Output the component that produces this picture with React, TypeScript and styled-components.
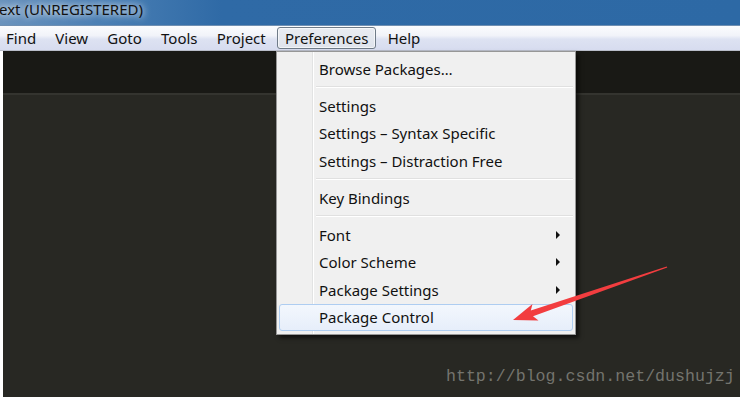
import React from 'react';
import styled, { createGlobalStyle } from 'styled-components';

type Entry =
  | { kind: 'item'; label: string; sub?: boolean; active?: boolean }
  | { kind: 'sep' };

const menuBarItems = ['Find', 'View', 'Goto', 'Tools', 'Project', 'Preferences', 'Help'];

const entries: Entry[] = [
  { kind: 'item', label: 'Browse Packages…' },
  { kind: 'sep' },
  { kind: 'item', label: 'Settings' },
  { kind: 'item', label: 'Settings – Syntax Specific' },
  { kind: 'item', label: 'Settings – Distraction Free' },
  { kind: 'sep' },
  { kind: 'item', label: 'Key Bindings' },
  { kind: 'sep' },
  { kind: 'item', label: 'Font', sub: true },
  { kind: 'item', label: 'Color Scheme', sub: true },
  { kind: 'item', label: 'Package Settings', sub: true },
  { kind: 'item', label: 'Package Control', active: true },
];

function App() {
  return (
    <>
      <GlobalStyle />
      <Page>
        <Window>
          <TitleBar>
            <TitleText>ext (UNREGISTERED)</TitleText>
          </TitleBar>
          <MenuBar>
            {menuBarItems.map((m) => (
              <MenuBarItem key={m} $open={m === 'Preferences'}>
                {m}
              </MenuBarItem>
            ))}
          </MenuBar>
          <Workspace>
            <TabStrip />
            <Editor />
          </Workspace>
        </Window>

        <Dropdown>
          <Gutter />
          {entries.map((e, i) =>
            e.kind === 'sep' ? (
              <Separator key={i} />
            ) : (
              <Item key={i} $active={e.active}>
                <span>{e.label}</span>
                {e.sub && <SubArrow />}
              </Item>
            )
          )}
        </Dropdown>

        <Pointer viewBox="0 0 747 397" width="747" height="397">
          <polygon
            points="513,320 538.5,320.5 533,316.2 667.3,267.6 666.7,266.4 530.8,310.6 532.5,304"
            fill="#f23d3f"
          />
        </Pointer>

        <Watermark>http://blog.csdn.net/dushujzj</Watermark>
      </Page>
    </>
  );
}

const GlobalStyle = createGlobalStyle`
  html, body {
    margin: 0;
    padding: 0;
    background: #fff;
  }
  body {
    font-family: 'Noto Sans', 'Open Sans', sans-serif;
    -webkit-font-smoothing: antialiased;
  }
`;

const Page = styled.div`
  position: relative;
  width: 747px;
  height: 397px;
  overflow: hidden;
  background: #ffffff;
`;

const Window = styled.div`
  width: 740px;
  height: 397px;
  display: flex;
  flex-direction: column;
`;

const TitleBar = styled.div`
  height: 25px;
  display: flex;
  align-items: flex-start;
  background: linear-gradient(90deg, #6a93bd 0%, #4a7fb4 14%, #2f6aa6 30%, #2d69a5 100%);
  border-bottom: 1px solid #6f8fb2;
`;

const TitleText = styled.div`
  margin-left: -1px;
  margin-top: 0;
  font-size: 15px;
  line-height: 18px;
  color: #111;
  text-shadow: 0 0 6px rgba(255, 255, 255, 0.9), 0 0 10px rgba(255, 255, 255, 0.6);
`;

const MenuBar = styled.div`
  height: 24px;
  display: flex;
  align-items: center;
  margin-left: -2px;
  background: linear-gradient(#fbfcfe 0%, #f1f3f9 40%, #dde2f2 55%, #d7dcef 100%);
  border-bottom: 1px solid #b9bdc9;
`;

const MenuBarItem = styled.div<{ $open?: boolean }>`
  height: 22px;
  display: flex;
  align-items: center;
  padding: 0 7px;
  margin-right: 3.2px;
  font-size: 15px;
  color: #111;
  box-sizing: border-box;
  border: 1px solid ${(p) => (p.$open ? '#6f7b88' : 'transparent')};
  border-radius: 3px;
  background: ${(p) =>
    p.$open ? 'linear-gradient(#e9ecf2, #dfe3ec)' : 'transparent'};
  box-shadow: ${(p) => (p.$open ? 'inset 0 0 0 1px rgba(255,255,255,0.6)' : 'none')};
`;

const Workspace = styled.div`
  flex: 1;
  margin-left: 3px;
  display: flex;
  flex-direction: column;
`;

const TabStrip = styled.div`
  height: 42px;
  background: #191915;
  border-bottom: 2px solid #34342f;
`;

const Editor = styled.div`
  flex: 1;
  background: #282823;
`;

const Dropdown = styled.div`
  position: absolute;
  left: 276px;
  top: 51px;
  width: 300px;
  box-sizing: border-box;
  padding: 3px 2px;
  background: #f0f0f0;
  border: 1px solid #979797;
  box-shadow: 3px 3px 4px rgba(0, 0, 0, 0.6);
  display: flex;
  flex-direction: column;
`;

const Gutter = styled.div`
  position: absolute;
  left: 35px;
  top: 0;
  bottom: 0;
  width: 1px;
  background: #e2e3e3;
  border-right: 1px solid #ffffff;
`;

const Item = styled.div<{ $active?: boolean }>`
  position: relative;
  height: 27.5px;
  box-sizing: border-box;
  display: flex;
  align-items: center;
  justify-content: space-between;
  padding: 0 12px 0 39px;
  font-size: 15px;
  color: #111;
  border-radius: 3px;
  border: 1px solid ${(p) => (p.$active ? '#aecdf1' : 'transparent')};
  background: ${(p) =>
    p.$active ? 'linear-gradient(#f3f7fd, #e6eefa)' : 'transparent'};
`;

const SubArrow = styled.span`
  width: 0;
  height: 0;
  border-top: 4px solid transparent;
  border-bottom: 4px solid transparent;
  border-left: 4px solid #111;
`;

const Separator = styled.div`
  height: 9.5px;
  margin-left: 37px;
  display: flex;
  align-items: center;
  &::after {
    content: '';
    flex: 1;
    height: 1px;
    background: #e0e0e0;
    border-bottom: 1px solid #ffffff;
  }
`;

const Pointer = styled.svg`
  position: absolute;
  left: 0;
  top: 0;
  pointer-events: none;
`;

const Watermark = styled.div`
  position: absolute;
  left: 446px;
  top: 366px;
  font-family: 'Liberation Mono', 'DejaVu Sans Mono', monospace;
  font-size: 16.6px;
  line-height: 22px;
  color: #74746e;
  white-space: nowrap;
`;

export default App;
